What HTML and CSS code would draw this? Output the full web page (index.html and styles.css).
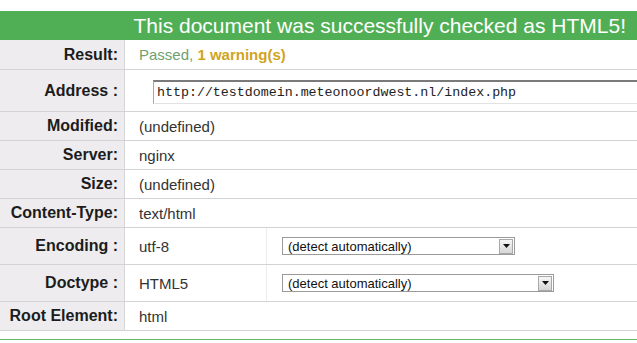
FILE: index.html
```html
<!DOCTYPE html>
<html lang="en">
<head>
    <meta charset="UTF-8">
    <meta name="viewport" content="width=device-width, initial-scale=1.0">
    <title>Validation Result</title>
    <link rel="stylesheet" href="styles.css">
</head>
<body>

    <div class="check-head">This document was successfully checked as HTML5!</div>

    <div class="result-table">
        <div class="row row-result">
            <div class="label">Result:</div>
            <div class="value"><span class="passed">Passed, </span><span class="warning">1 warning(s)</span></div>
        </div>
        <div class="row row-address">
            <div class="label">Address :</div>
            <div class="value value-input">
                <input class="uri" type="text" value="http://testdomein.meteonoordwest.nl/index.php">
            </div>
        </div>
        <div class="row">
            <div class="label">Modified:</div>
            <div class="value">(undefined)</div>
        </div>
        <div class="row">
            <div class="label">Server:</div>
            <div class="value">nginx</div>
        </div>
        <div class="row">
            <div class="label">Size:</div>
            <div class="value">(undefined)</div>
        </div>
        <div class="row">
            <div class="label">Content-Type:</div>
            <div class="value">text/html</div>
        </div>
        <div class="row row-tall">
            <div class="label">Encoding :</div>
            <div class="value value-short">utf-8</div>
            <div class="value value-select">
                <div class="select select-enc">
                    <span class="select-text">(detect automatically)</span>
                    <span class="select-btn">
                        <svg width="7" height="4" viewBox="0 0 7 4"><path d="M0 0h7L3.5 4z" fill="#111"/></svg>
                    </span>
                </div>
            </div>
        </div>
        <div class="row row-tall">
            <div class="label">Doctype :</div>
            <div class="value value-short">HTML5</div>
            <div class="value value-select">
                <div class="select select-doc">
                    <span class="select-text">(detect automatically)</span>
                    <span class="select-btn">
                        <svg width="7" height="4" viewBox="0 0 7 4"><path d="M0 0h7L3.5 4z" fill="#111"/></svg>
                    </span>
                </div>
            </div>
        </div>
        <div class="row">
            <div class="label">Root Element:</div>
            <div class="value">html</div>
        </div>
    </div>

    <div class="bottom-rule"></div>

</body>
</html>
```

FILE: styles.css
```css
body {
    margin: 0;
    overflow: hidden;
    background-color: #fff;
    font-family: "Liberation Sans", Arial, sans-serif;
    color: #333;
}
.check-head {
    margin-top: 11px;
    height: 29px;
    line-height: 30px;
    padding-right: 11px;
    background-color: #50af55;
    color: #fff;
    font-size: 21px;
    text-align: right;
}
.result-table {
    width: 100%;
}
.row {
    display: flex;
    min-height: 28px;
    border-bottom: 1px solid #d3d3d3;
}
.row-result {
    min-height: 29px;
}
.row-address {
    min-height: 41px;
}
.row-tall {
    min-height: 36px;
}
.label {
    width: 118px;
    flex: none;
    display: flex;
    align-items: center;
    justify-content: flex-end;
    padding-right: 6px;
    background-color: #eeecee;
    border-right: 1px solid #d6d6d6;
    font-size: 16px;
    font-weight: bold;
    color: #1c1c1c;
}
.value {
    display: flex;
    align-items: center;
    padding-left: 14px;
    font-size: 15px;
    color: #333;
}
.passed {
    color: #6f9f6f;
    white-space: pre;
}
.warning {
    color: #d0a41e;
    font-weight: bold;
}
.value-input {
    flex: 1;
    padding-left: 28px;
    padding-top: 2px;
    overflow: hidden;
}
.uri {
    width: 520px;
    flex: none;
    height: 21px;
    margin: 0;
    padding: 0 3px;
    border: 1px solid;
    border-top-width: 2px;
    border-color: #7a7a7a #b4b4b4 #e2e2e2 #a8a8a8;
    font-family: "Liberation Mono", "Courier New", monospace;
    font-size: 13.3px;
    color: #222;
    background-color: #fff;
}
.value-short {
    width: 127px;
    border-right: 1px solid #ececec;
}
.value-select {
    padding-left: 15px;
}
.select {
    display: flex;
    align-items: center;
    justify-content: space-between;
    height: 16px;
    border: 1px solid #9a9a9a;
    background-color: #fff;
    font-size: 13px;
    color: #111;
}
.select-enc {
    width: 231px;
}
.select-doc {
    width: 270px;
}
.select-text {
    padding-left: 5px;
}
.select-btn {
    display: flex;
    align-items: center;
    justify-content: center;
    width: 12px;
    height: 13px;
    margin-right: 1px;
    border: 1px solid #a8a8a8;
    background: linear-gradient(#f6f6f6, #d6d6d6);
}
.bottom-rule {
    margin-top: 8px;
    height: 1px;
    background-color: #62b866;
}
```
